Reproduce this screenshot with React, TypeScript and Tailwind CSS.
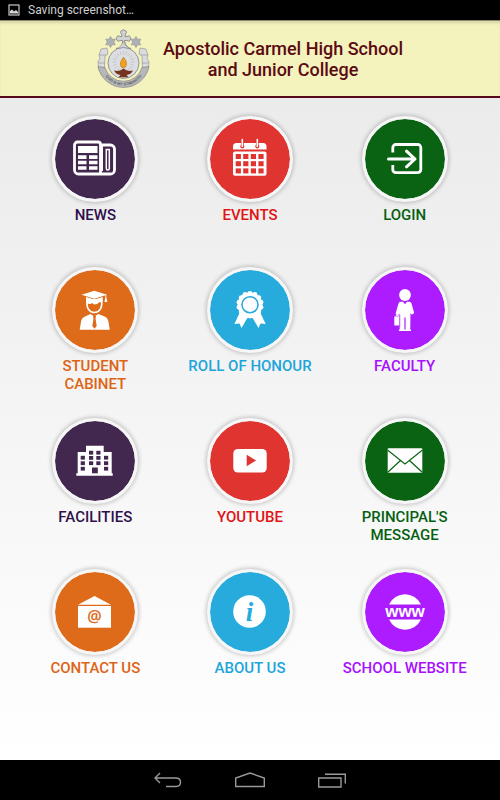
import type { ReactNode } from "react";

const PURPLE = "#42284f";
const RED = "#df342f";
const ORANGE = "#dd6b19";
const BLUE = "#27abdc";

function NewsIcon() {
  return (
    <g>
      <path d="M45 26H55.5A4 4 0 0 1 59.5 30V51A4 4 0 0 1 55.5 55H23.5A4 4 0 0 1 19.5 51V26A3 3 0 0 1 22.5 23H43A2.500 2.500 0 0 1 45.500 25.500V55" fill="none" stroke="#fff" strokeWidth="2.8" />
      <path d="M46.500 26.500V52" stroke="#fff" strokeWidth="3" />
      <path d="M23 27H42.500V34H23ZM23 36.300H31.500V40H23ZM34 36.300H42.500V40H34ZM23 41.800H31.500V45.200H23ZM34 41.800H42.500V45.200H34ZM23 47.200H31.500V50.800H23ZM34 47.200H42.500V50.800H34Z" fill="#fff" />
      <path d="M51.300 30.500H54.300V49.500Q54.300 51 52.800 51Q51.300 51 51.300 49.500Z" fill="none" stroke="#fff" strokeWidth="1.500" />
    </g>
  );
}

function EventsIcon() {
  const cols = [25.7, 33.2, 40.8, 48.4];
  const rows = [35, 42.2, 49.4];
  return (
    <g>
      <path d="M23 30.500V27.500A3.500 3.500 0 0 1 26.500 24H53A3.500 3.500 0 0 1 56.500 27.500V30.500Z" fill="#fff" />
      <rect x="23" y="32.500" width="33.500" height="24.300" rx="2" fill="#fff" />
      {rows.map((y) => cols.map((x) => <rect key={`${x}-${y}`} x={x} y={y} width="5.200" height="5" fill={RED} />))}
      {[32.3, 47.3].map((x) => (
        <g key={x}>
          <circle cx={x} cy="27.500" r="2" fill={RED} />
          <path d={`M${x} 22V27`} stroke={RED} strokeWidth="2.800" />
          <path d={`M${x} 20.500V27.500`} stroke="#fff" strokeWidth="1.600" strokeLinecap="round" />
        </g>
      ))}
    </g>
  );
}

function LoginIcon() {
  return (
    <g fill="none" stroke="#fff" strokeWidth="2.800">
      <path d="M27.800 33.500V28.500A3 3 0 0 1 30.800 25.500H52.800A3 3 0 0 1 55.800 28.500V50.700A3 3 0 0 1 52.800 53.700H30.800A3 3 0 0 1 27.800 50.700V46" />
      <path d="M23.500 40H50M41.500 32.200L50 40L41.500 47.800" strokeLinecap="round" strokeLinejoin="round" strokeWidth="3" />
    </g>
  );
}

function StudentIcon() {
  return (
    <g>
      <path d="M26.500 24.700L39.300 20.700L52 24.700L39.300 28.700Z" fill="#fff" />
      <path d="M31 27V31.500Q39.300 27.500 47.800 31.500V27L39.300 29.500Z" fill="#fff" />
      <path d="M50.800 25V29" stroke="#fff" strokeWidth="1" />
      <path d="M50 28.500H51.700L52.300 32H49.500Z" fill="#fff" />
      <path d="M32 30Q31 42 39.300 42.500Q47.700 42 46.700 30" fill="none" stroke="#fff" strokeWidth="1.600" />
      <path d="M32 29H47V35Q46 33 45 31.800Q42.500 34.500 39.500 34.500Q38 34.300 37 32.500Q36.500 35 33 33.500L32 35.500Z" fill="#fff" />
      <path d="M24.700 59.700L26.200 50.500Q27 47.500 30 46.500L35.500 44L39.300 46.500L43.300 44L49.500 46.500Q52.500 47.500 53.200 50.500L54.800 59.700Z" fill="#fff" />
      <path d="M38 46H41L40.500 48.500L41.700 56L39.500 58.800L37.300 56L38.500 48.500Z" fill={ORANGE} />
    </g>
  );
}

function AwardIcon() {
  const bumps = Array.from({ length: 14 }, (_, i) => (i * Math.PI * 2) / 14 - Math.PI / 2);
  return (
    <g>
      <path d="M30 42L24.400 54L29.500 53.500L31.500 58L37 48.500Q40 46 43 48.500L48.500 58L50.500 53.500L55.700 54L50 42Z" fill="#fff" />
      <circle cx="40" cy="34.700" r="12.400" fill="#fff" />
      {bumps.map((a) => (
        <circle key={a} cx={40 + Math.cos(a) * 11.3} cy={34.7 + Math.sin(a) * 11.3} r="2.400" fill="#fff" />
      ))}
      <circle cx="40" cy="34.700" r="8" fill="none" stroke={BLUE} strokeWidth="1.600" />
    </g>
  );
}

function FacultyIcon() {
  return (
    <g fill="#fff">
      <circle cx="40" cy="25" r="5.900" />
      <path d="M35.500 31.800H38L40 34.300L42 31.800H44.500Q46 32 46.500 33.500L49.200 43L46.800 44.800L45.500 43L45.200 60.800H34.800L34.300 43.500L33 45.500L30.500 44L33.500 33.500Q34 32 35.500 31.800Z" />
      <path d="M40 47.500V61" stroke="#ad1cff" strokeWidth="1.200" />
      <rect x="34" y="59.500" width="12" height="1.500" />
      <rect x="29.300" y="46.500" width="5" height="9" rx="0.500" />
      <path d="M31 47V45.500H33.500V47" fill="none" stroke="#fff" strokeWidth="0.800" />
      <path d="M34.800 44.500V57" stroke="#ad1cff" strokeWidth="0.600" />
    </g>
  );
}

function FacilitiesIcon() {
  return (
    <g>
      <path d="M31 24.700H48.700V31H56.700V52.300H57.700V54.700H21.300V52.300H22.700V31H31Z" fill="#fff" />
      <g fill={PURPLE}>
        {[25.7, 49].map((x) => [34.8, 40.3, 45.8].map((y) => <rect key={`${x}-${y}`} x={x} y={y} width="4.200" height="3.800" />))}
        {[34, 41.3].map((x) => [29.8, 35, 40.3].map((y) => <rect key={`${x}-${y}`} x={x} y={y} width="4.200" height="3.800" />))}
        <rect x="37" y="46.500" width="5.800" height="5.800" />
      </g>
    </g>
  );
}

function YoutubeIcon() {
  return (
    <g>
      <rect x="23.300" y="28" width="33.400" height="23.500" rx="4.500" fill="#fff" />
      <path d="M36.700 33.700L46.200 39.500L36.700 45.300Z" fill={RED} />
    </g>
  );
}

function MailIcon() {
  return (
    <g>
      <rect x="22.700" y="27.300" width="34.600" height="24.500" rx="1" fill="#fff" />
      <path d="M22.500 29L40 43L57.500 29M23 51L35.500 39.500M57 51L44.500 39.500" fill="none" stroke="#096313" strokeWidth="1.200" />
    </g>
  );
}

function ContactIcon() {
  return (
    <g>
      <path d="M23 32.800L39.500 24L56 32.800Z" fill="#fff" />
      <rect x="23" y="34" width="33" height="21.700" fill="#fff" />
      <text x="39.500" y="49.500" textAnchor="middle" fontSize="16" fontWeight="600" fill={ORANGE} className="font-['Noto_Sans',sans-serif]">@</text>
    </g>
  );
}

function AboutIcon() {
  return (
    <g>
      <circle cx="39.500" cy="39.500" r="16.300" fill="#fff" />
      <text x="39.500" y="48.500" textAnchor="middle" fontSize="27" fontWeight="700" fontStyle="italic" fill={BLUE} className="font-['Liberation_Serif',serif]">i</text>
    </g>
  );
}

function WebsiteIcon() {
  return (
    <g fill="#fff">
      <path d="M24 32.500A17.700 17.700 0 0 1 56 32.500Z" />
      <path d="M24 47.500A17.700 17.700 0 0 0 56 47.500Z" />
      <text x="40" y="44.500" textAnchor="middle" fontSize="17" fontWeight="700" className="font-['Liberation_Sans',sans-serif]">www</text>
    </g>
  );
}

type Tile = { label: string; href: string; circle: string; text: string; icon: ReactNode };

const violet = { circle: "bg-[#42284f]", text: "text-[#30104a]" };
const red = { circle: "bg-[#df342f]", text: "text-[#e01414]" };
const green = { circle: "bg-[#096313]", text: "text-[#075f12]" };
const orange = { circle: "bg-[#dd6b19]", text: "text-[#dd6415]" };
const blue = { circle: "bg-[#27abdc]", text: "text-[#1ca5da]" };
const magenta = { circle: "bg-[#ad1cff]", text: "text-[#a80fff]" };

const tiles: Tile[] = [
  { label: "NEWS", href: "#news", ...violet, icon: <NewsIcon /> },
  { label: "EVENTS", href: "#events", ...red, icon: <EventsIcon /> },
  { label: "LOGIN", href: "#login", ...green, icon: <LoginIcon /> },
  { label: "STUDENT CABINET", href: "#cabinet", ...orange, icon: <StudentIcon /> },
  { label: "ROLL OF HONOUR", href: "#honour", ...blue, icon: <AwardIcon /> },
  { label: "FACULTY", href: "#faculty", ...magenta, icon: <FacultyIcon /> },
  { label: "FACILITIES", href: "#facilities", ...violet, icon: <FacilitiesIcon /> },
  { label: "YOUTUBE", href: "#youtube", ...red, icon: <YoutubeIcon /> },
  { label: "PRINCIPAL'S MESSAGE", href: "#message", ...green, icon: <MailIcon /> },
  { label: "CONTACT US", href: "#contact", ...orange, icon: <ContactIcon /> },
  { label: "ABOUT US", href: "#about", ...blue, icon: <AboutIcon /> },
  { label: "SCHOOL WEBSITE", href: "#website", ...magenta, icon: <WebsiteIcon /> },
];

function MenuTile({ tile }: { tile: Tile }) {
  return (
    <a href={tile.href} className="flex h-[151px] flex-col items-center">
      <span className={`rounded-full border-[3px] border-[#f6f6f6] bg-clip-padding shadow-[0_0_4px_1px_rgba(0,0,0,0.22)] ${tile.circle}`}>
        <svg viewBox="0 0 80 80" className="block size-20" aria-hidden="true">
          {tile.icon}
        </svg>
      </span>
      <span className={`mt-1 max-w-32 text-center text-[15px] leading-[18px] font-medium ${tile.text}`}>{tile.label}</span>
    </a>
  );
}

function Crest() {
  const rays = Array.from({ length: 20 }, (_, i) => (i * Math.PI * 2) / 20);
  const star = "M0 -5.500L1.700 -2.800L4.800 -2.800L3.300 0L4.800 2.800L1.700 2.800L0 5.500L-1.700 2.800L-4.800 2.800L-3.300 0L-4.800 -2.800L-1.700 -2.800Z";
  return (
    <svg viewBox="0 0 54 60" className="h-[60px] w-[54px] shrink-0" role="img" aria-label="School crest">
      <g fill="#d9dbdd" stroke="#8b8d90" strokeWidth="0.600">
        <path d="M4 20L10 19L11 25L8 27L7.500 39L1.500 39L1 32L3 30L2 26Z" />
        <path d="M49 20L43 19L42 25L45 27L45.500 39L51.500 39L52 32L50 30L51 26Z" />
        <path d="M2 26L9 26M1.500 34H8M51 26L44 26M51.500 34H45" />
      </g>
      <path d="M1 37.500L8 38.500A19.300 19.300 0 0 0 45 38.500L52 37.500A26 26 0 0 1 1 37.500Z" fill="#b5b7b9" stroke="#77797c" strokeWidth="0.600" />
      <path d="M25.300 19L25.500 11.500H23Q21.500 13 20 11.500Q18.500 9.500 20 7.500Q21.500 6 23 7.500H25L24.500 5Q22.800 3.500 24 2Q26.500 -0.500 29 2Q30.200 3.500 28.500 5L28 7.500H30Q31.500 6 33 7.500Q34.500 9.500 33 11.500Q31.500 13 30 11.500H27.500L28 14Q28.500 17 32 19Z" fill="#d0d2d4" stroke="#707276" strokeWidth="0.700" />
      <path d="M19 19.500Q25 18 25.500 13H27.500Q28 18 34 19.500Z" fill="#d0d2d4" stroke="#707276" strokeWidth="0.500" />
      <circle cx="26.500" cy="34" r="15.500" fill="#dcdee1" stroke="#7e8083" strokeWidth="0.800" />
      {rays.map((a) => (
        <line key={a} x1={26.5 + Math.cos(a) * 7.5} y1={33 + Math.sin(a) * 7.5} x2={26.5 + Math.cos(a) * 11} y2={33 + Math.sin(a) * 11} stroke="#b3b6ba" strokeWidth="0.600" />
      ))}
      <path d={star} transform="translate(13.500 13)" fill="#adb0b5" stroke="#84878b" strokeWidth="0.500" />
      <path d={star} transform="translate(39 13)" fill="#adb0b5" stroke="#84878b" strokeWidth="0.500" />
      <path d="M17 41.500Q23 43 26.500 39.500Q30 43 36 41.500Q34 45.500 29.500 46L31.500 48.300H21.500L23.500 46Q19 45.500 17 41.500Z" fill="#75341f" />
      <path d="M26.500 28Q30.500 33 29.500 36Q28.700 39 26.500 39Q24 39 23.300 36Q22.700 33 26.500 28Z" fill="#f3a11c" stroke="#8a5a20" strokeWidth="0.400" />
      <path id="crest-motto" d="M5.500 42A22.500 22.500 0 0 0 47.500 42" fill="none" />
      <text fontSize="3.800" fontWeight="700" fill="#5e6064" className="font-['Liberation_Sans',sans-serif]">
        <textPath href="#crest-motto" startOffset="50%" textAnchor="middle">GOD IS MY STRENGTH</textPath>
      </text>
    </svg>
  );
}

export default function App() {
  return (
    <div className="flex min-h-screen flex-col bg-black font-['Roboto',sans-serif]">
      <div className="flex h-5 items-center gap-2 pl-2 text-[12px] leading-5 text-[#cfcfcf]">
        <svg viewBox="0 0 12 12" className="size-3" aria-hidden="true">
          <rect x="1" y="1" width="10" height="10" fill="none" stroke="#c8c8c8" strokeWidth="1.200" />
          <path d="M2 9.500V7L4 5.500L6 7.500L8 6L10 8V9.500Z" fill="#d8d8d8" />
        </svg>
        <span>Saving screenshot…</span>
      </div>

      <header className="flex h-[78px] items-center justify-center gap-3 border-t border-b-2 border-t-[#8b8a6c] border-b-[#57091a] bg-[#f4f2bd] shadow-[inset_0_3px_3px_-1px_rgba(0,0,0,0.12)]">
        <Crest />
        <h1 className="text-center text-[18px] leading-[21px] font-medium text-[#5b0a12]">
          Apostolic Carmel High School
          <br />
          and Junior College
        </h1>
      </header>

      <main className="flex-1 bg-linear-to-b from-[#ebebeb] to-white px-[18px] pt-[18px]">
        <nav aria-label="Main menu" className="grid grid-cols-3">
          {tiles.map((tile) => (
            <MenuTile key={tile.label} tile={tile} />
          ))}
        </nav>
      </main>

      <footer className="flex h-10 items-center justify-center gap-[50px] bg-black">
        <button type="button" aria-label="Back">
          <svg viewBox="0 0 32 20" className="block h-5 w-8" fill="none" stroke="#999" strokeWidth="1.400">
            <path d="M8 3L3 8L8 13M3 8H24Q28.500 8 28.500 12.300Q28.500 16.500 24 16.500H14" />
          </svg>
        </button>
        <button type="button" aria-label="Home">
          <svg viewBox="0 0 32 20" className="block h-5 w-8" fill="none" stroke="#999" strokeWidth="1.400">
            <path d="M1.700 16.500V8L16 3L30.300 8V16.500Z" />
          </svg>
        </button>
        <button type="button" aria-label="Recent apps">
          <svg viewBox="0 0 32 20" className="block h-5 w-8" fill="none" stroke="#999" strokeWidth="1.400">
            <path d="M2.700 8H25V17H2.700ZM9 4.300H29.300V13.500" />
          </svg>
        </button>
      </footer>
    </div>
  );
}
